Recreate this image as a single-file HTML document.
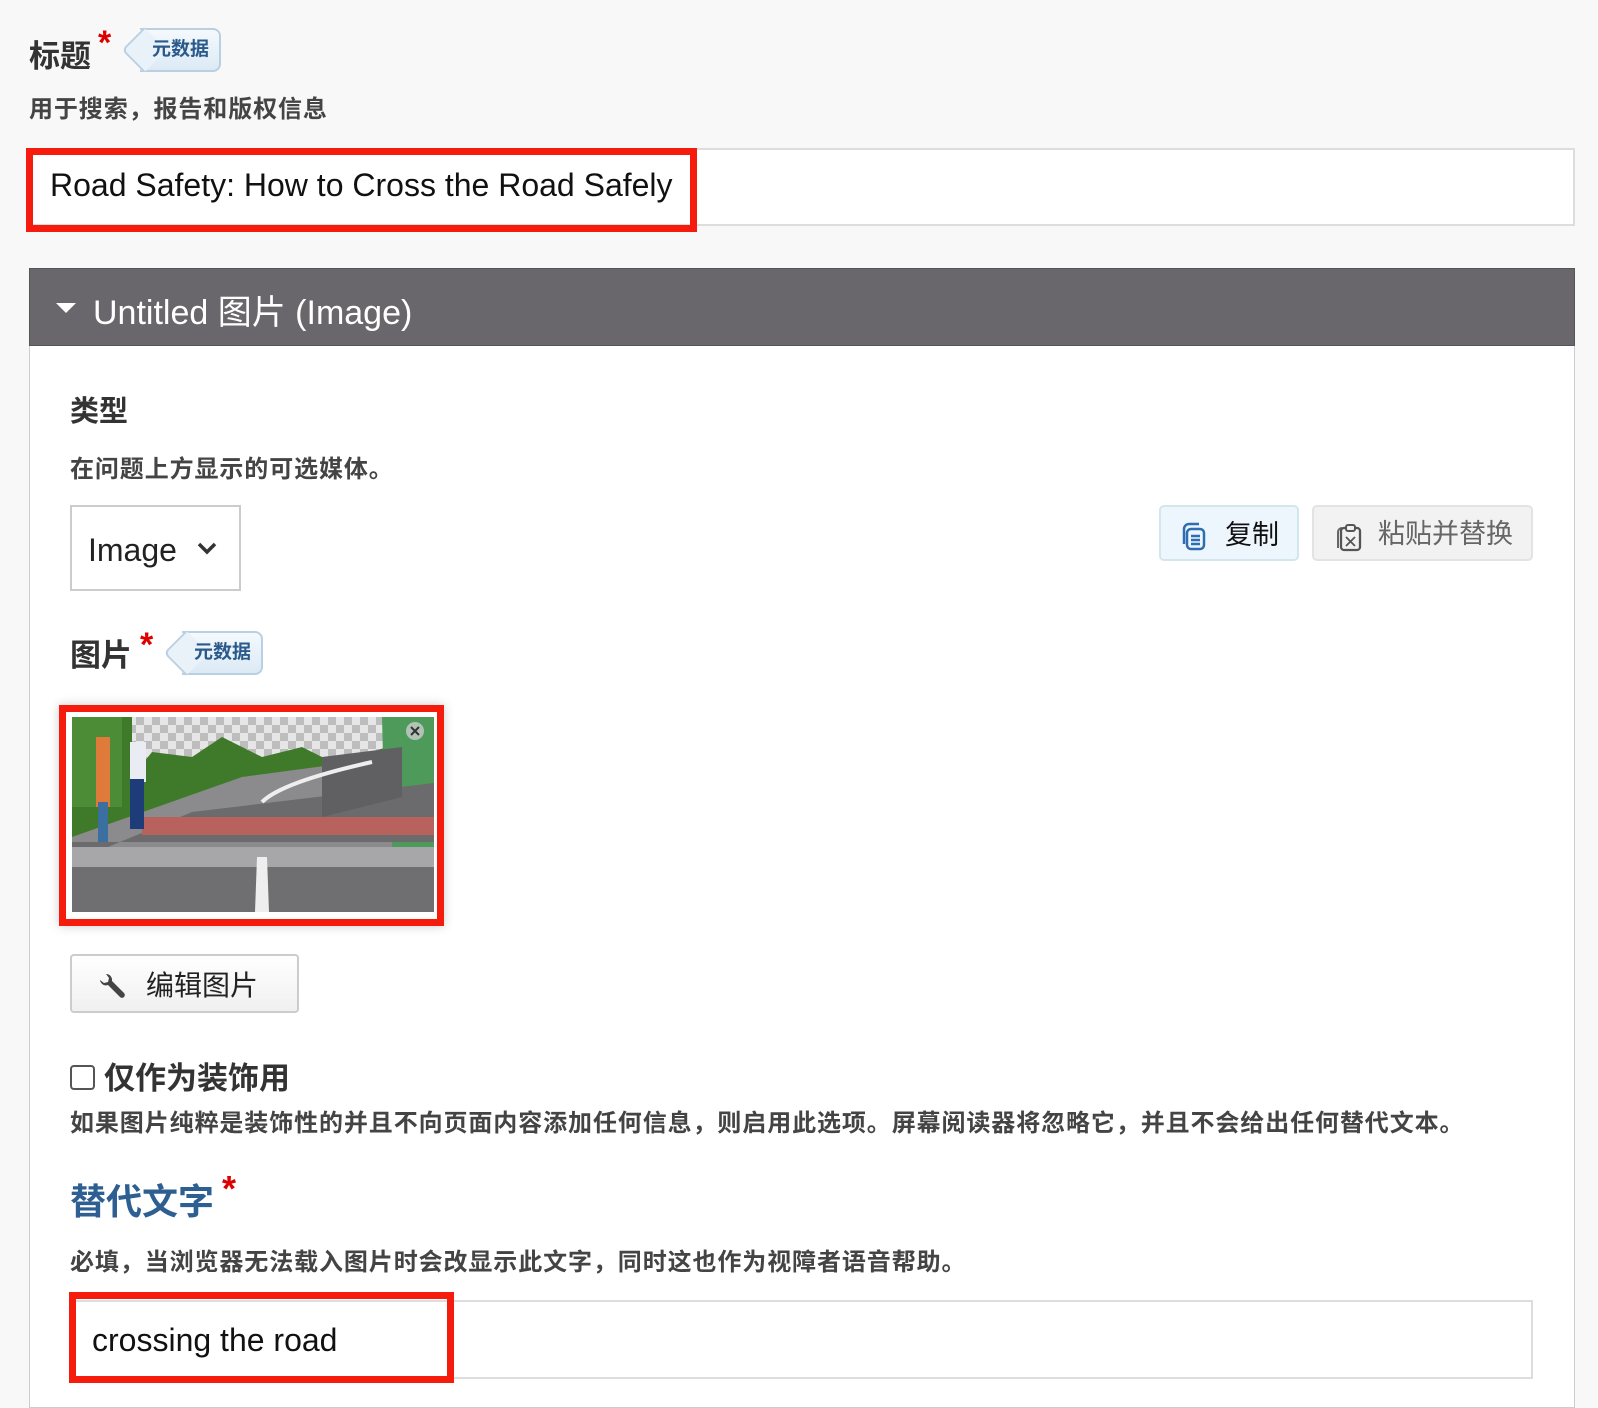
<!DOCTYPE html>
<html><head><meta charset="utf-8"><style>
*{box-sizing:border-box;margin:0;padding:0}
body{width:1598px;height:1398px;overflow:hidden;background:#f8f8f8;font-family:"Liberation Sans","Noto Sans CJK SC",sans-serif;color:#333;position:relative}
.a{position:absolute}
.badge{position:absolute;height:44px;background:linear-gradient(#f4f9fd,#dceaf5);border:2px solid #b9d0e3;border-left:none;border-radius:0 8px 8px 0;color:#2a5a8c;font-size:19px;font-weight:bold;line-height:40px;padding:0 10px 0 12px}
.badge:before{content:"";position:absolute;left:-12px;top:4px;width:30px;height:30px;transform:rotate(45deg);border-left:2px solid #b9d0e3;border-bottom:2px solid #b9d0e3;background:#eaf2f9;border-radius:0 0 0 6px;z-index:-1}
.star{color:#d00;font-weight:bold}
.d{font-size:24px;font-weight:bold;color:#444;letter-spacing:0.9px}
</style></head><body>
<div class="a" style="left:29px;top:31px;font-size:31px;font-weight:bold;color:#333">标题</div>
<div class="a star" style="left:98px;top:24px;font-size:34px">*</div>
<div class="badge" style="left:140px;top:28px;z-index:1">元数据</div>
<div class="a d" style="left:29px;top:89px">用于搜索，报告和版权信息</div>
<div class="a" style="left:29px;top:148px;width:1546px;height:78px;background:#fff;border:2px solid #ddd"></div>
<div class="a" style="left:26px;top:148px;width:671px;height:84px;border:7px solid #f61c0d"></div>
<div class="a" style="left:50px;top:167px;font-size:32px;color:#111">Road Safety: How to Cross the Road Safely</div>

<div class="a" style="left:29px;top:268px;width:1546px;height:1140px;background:#fff;border:1px solid #ccc"></div>
<div class="a" style="left:29px;top:268px;width:1546px;height:78px;background:#69676b;border:1px solid #555"></div>
<div class="a" style="left:56px;top:303px;width:0;height:0;border-left:10px solid transparent;border-right:10px solid transparent;border-top:10px solid #fff"></div>
<div class="a" style="left:93px;top:285px;font-size:34px;color:#fff">Untitled 图片 (Image)</div>

<div class="a" style="left:70px;top:388px;font-size:29px;font-weight:bold">类型</div>
<div class="a d" style="left:70px;top:449px">在问题上方显示的可选媒体。</div>
<div class="a" style="left:70px;top:505px;width:171px;height:86px;border:2px solid #ccc;background:#fff"></div>
<div class="a" style="left:88px;top:532px;font-size:32px;color:#222">Image</div>
<svg class="a" style="left:196px;top:540px" width="22" height="16"><path d="M3 4l8 8 8-8" stroke="#333" stroke-width="3.5" fill="none"/></svg>

<div class="a" style="left:1159px;top:505px;width:140px;height:56px;background:#eef6fd;border:2px solid #d3e6ec;border-radius:5px"></div>
<svg class="a" style="left:1178px;top:520px" width="30" height="32" viewBox="0 0 30 32"><path d="M6 24V9a5 5 0 0 1 5-5h10" stroke="#2f6db3" stroke-width="2.5" fill="none"/><rect x="9" y="9" width="17" height="20" rx="4" stroke="#2f6db3" stroke-width="2.5" fill="none"/><path d="M13 16h9M13 20h9M13 24h9" stroke="#2f6db3" stroke-width="2.5"/></svg>
<div class="a" style="left:1225px;top:513px;font-size:27px;color:#111">复制</div>
<div class="a" style="left:1312px;top:505px;width:221px;height:56px;background:#f2f2f2;border:2px solid #e3e3e3;border-radius:5px"></div>
<svg class="a" style="left:1333px;top:520px" width="30" height="34" viewBox="0 0 30 34"><path d="M5 28V12a4 4 0 0 1 4-4" stroke="#666" stroke-width="2" fill="none"/><rect x="8" y="8" width="19" height="22" rx="3" stroke="#555" stroke-width="2.3" fill="none"/><rect x="13" y="5" width="9" height="6" rx="2" stroke="#555" stroke-width="2" fill="#f2f2f2"/><path d="M13 17l9 9M22 17l-9 9" stroke="#555" stroke-width="1.8"/></svg>
<div class="a" style="left:1378px;top:512px;font-size:27px;color:#666">粘贴并替换</div>

<div class="a" style="left:70px;top:630px;font-size:31px;font-weight:bold">图片</div>
<div class="a star" style="left:140px;top:626px;font-size:34px">*</div>
<div class="badge" style="left:182px;top:631px;z-index:1">元数据</div>

<div class="a" style="left:59px;top:705px;width:385px;height:221px;border:7px solid #f61c0d;background:#fff;box-shadow:0 0 10px rgba(0,0,0,.2)"></div>
<svg class="a" style="left:72px;top:717px" width="362" height="195" viewBox="0 0 362 195">
<defs><pattern id="ck" width="16" height="16" patternUnits="userSpaceOnUse"><rect width="16" height="16" fill="#e6e6e6"/><rect width="8" height="8" fill="#bdbdbd"/><rect x="8" y="8" width="8" height="8" fill="#bdbdbd"/></pattern></defs>
<rect width="362" height="195" fill="url(#ck)"/>
<path d="M0 0h60v60l20-25 40 5 30-20 40 20 40-10 30 15 40-10 60-20V80L0 130z" fill="#3f7a2a"/>
<path d="M0 0h50v90H0z" fill="#4c8c36"/>
<path d="M310 0h52v140h-60l10-60z" fill="#4d9a5b"/>
<path d="M0 120l170-60 150-20v110H0z" fill="#8b8a8d"/>
<path d="M0 145l120-50 250-30v60H0z" fill="#6b6a6d"/>
<path d="M250 40l80-10v50l-80 20z" fill="#605f62"/>
<rect x="70" y="100" width="292" height="18" fill="#b7625c"/>
<path d="M0 150h362v45H0z" fill="#6f6e71"/>
<rect x="0" y="130" width="362" height="20" fill="#a7a6a9"/>
<path d="M185 140h10l2 55h-14z" fill="#eee"/>
<path d="M190 85q20-20 110-40" stroke="#eee" stroke-width="4" fill="none"/>
<rect x="24" y="20" width="14" height="70" fill="#e07a3a"/><rect x="26" y="85" width="10" height="40" fill="#3a6fa0"/>
<rect x="58" y="25" width="16" height="40" fill="#e9ecf3"/><rect x="58" y="62" width="14" height="50" fill="#1f3c7a"/>
<circle cx="343" cy="14" r="9" fill="#ccc" opacity=".8"/><path d="M339 10l8 8M347 10l-8 8" stroke="#333" stroke-width="2"/>
</svg>

<div class="a" style="left:70px;top:954px;width:229px;height:59px;border:2px solid #ccc;border-radius:4px;background:linear-gradient(#fff,#f0f0f0)"></div>
<svg class="a" style="left:96px;top:972px" width="30" height="30" viewBox="0 0 30 30"><path d="M4 8a6 6 0 0 0 8 5l12 12a2.5 2.5 0 0 0 4-4L16 9A6 6 0 0 0 10 2l3 4-1 4-4 1z" fill="#444"/></svg>
<div class="a" style="left:146px;top:964px;font-size:28px;color:#222">编辑图片</div>

<div class="a" style="left:70px;top:1065px;width:25px;height:25px;border:2px solid #555;border-radius:4px;background:#fff"></div>
<div class="a" style="left:104px;top:1053px;font-size:31px;font-weight:bold;color:#333">仅作为装饰用</div>
<div class="a d" style="left:70px;top:1103px">如果图片纯粹是装饰性的并且不向页面内容添加任何信息，则启用此选项。屏幕阅读器将忽略它，并且不会给出任何替代文本。</div>
<div class="a" style="left:70px;top:1173px;font-size:36px;font-weight:bold;color:#2e5f93">替代文字</div>
<div class="a star" style="left:222px;top:1168px;font-size:36px">*</div>
<div class="a d" style="left:70px;top:1242px">必填，当浏览器无法载入图片时会改显示此文字，同时这也作为视障者语音帮助。</div>
<div class="a" style="left:70px;top:1300px;width:1463px;height:79px;background:#fff;border:2px solid #ddd"></div>
<div class="a" style="left:69px;top:1292px;width:385px;height:91px;border:7px solid #f61c0d"></div>
<div class="a" style="left:92px;top:1322px;font-size:32px;color:#111">crossing the road</div>
</body></html>
